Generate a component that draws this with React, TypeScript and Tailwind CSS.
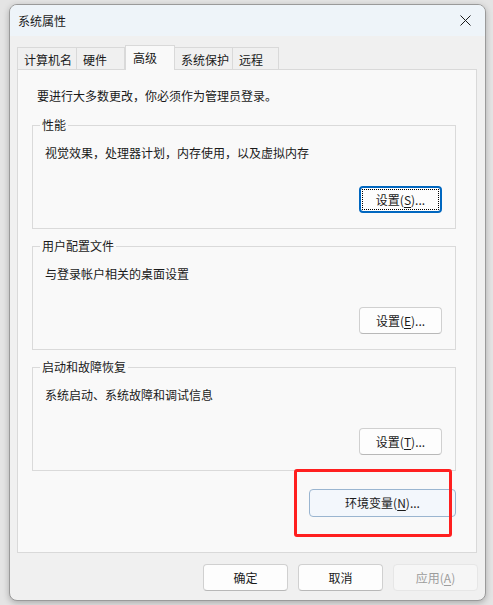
import React from 'react';

const font = { fontFamily: '"Noto Sans CJK SC", "Microsoft YaHei", sans-serif' };

const Mn: React.FC<{ k: string }> = ({ k }) => <span className="underline underline-offset-2">{k}</span>;

interface BtnProps {
  children: React.ReactNode;
  variant?: 'normal' | 'focus' | 'hover' | 'disabled';
  className?: string;
}

const Btn: React.FC<BtnProps> = ({ children, variant = 'normal', className = '' }) => {
  if (variant === 'focus') {
    return (
      <div className={`h-[27px] rounded-[4px] border-2 border-[#0067c0] bg-[#fdfdfd] p-[1px] ${className}`}>
        <div className="h-full w-full border border-dotted border-black flex items-center justify-center text-[12px] text-[#1a1a1a]">
          {children}
        </div>
      </div>
    );
  }
  const styles = {
    normal: 'border-[#d0d0d0] border-b-[#b8b8b8] bg-[#fdfdfd] text-[#1a1a1a]',
    hover: 'border-[#9ab5d0] bg-[#f3f7fc] text-[#1a1a1a]',
    disabled: 'border-[#e6e6e6] bg-[#f6f6f6] text-[#9d9d9d]',
  }[variant];
  return (
    <div className={`h-[27px] rounded-[4px] border flex items-center justify-center text-[12px] ${styles} ${className}`}>
      {children}
    </div>
  );
};

const Group: React.FC<{ title: string; text: string; btn: React.ReactNode }> = ({ title, text, btn }) => (
  <fieldset className="border border-[#dadada] w-[424px] h-[112px] -mt-[8px] flex flex-col">
    <legend className="ml-[7px] px-[2px] text-[12px] leading-[16px] text-[#1a1a1a]">{title}</legend>
    <div className="pl-[12px] mt-[12px] text-[12px] leading-[16px] text-[#1a1a1a]">{text}</div>
    <div className="flex justify-end pr-[13px] mt-[25px]">{btn}</div>
  </fieldset>
);

const tabs = ['计算机名', '硬件', '高级', '系统保护', '远程'];
const tabW = ['w-[60px]', 'w-[48px]', 'w-[50px]', 'w-[58px]', 'w-[46px]'];

export default function App() {
  return (
    <div className="w-[493px] h-[605px] bg-[#e4e4e4] pt-[4px] pl-[9px] overflow-hidden" style={font}>
      <div className="w-[477px] h-[597px] rounded-[8px] border border-[#9a9a9a] bg-[#f0f0f0] overflow-hidden flex flex-col shadow-[0_2px_6px_rgba(0,0,0,0.25)]">
        {/* Title bar */}
        <div className="h-[31px] bg-[#eef4f9] flex items-center justify-between pl-[8px] pr-[14px] shrink-0">
          <span className="text-[12px] text-[#1a1a1a]">系统属性</span>
          <svg width="11" height="11" viewBox="0 0 11 11">
            <path d="M0.5 0.5 L10.5 10.5 M10.5 0.5 L0.5 10.5" stroke="#1a1a1a" strokeWidth="1" />
          </svg>
        </div>

        <div className="flex flex-col pl-[7px] pr-[8px] pt-[9px]">
          {/* Tabs */}
          <div className="flex items-end h-[24px] relative z-10">
            {tabs.map((t, i) =>
              i === 2 ? (
                <div
                  key={t}
                  className={`${tabW[i]} h-[25px] -mb-px bg-[#f9f9f9] border border-b-0 border-[#d9d9d9] text-[12px] text-[#1a1a1a] pl-[7px] pt-[3px]`}
                >
                  {t}
                </div>
              ) : (
                <div
                  key={t}
                  className={`${tabW[i]} h-[22px] bg-[#f0f0f0] border border-b-0 border-[#d9d9d9] ${i > 0 ? 'border-l-0' : ''} ${i === 3 ? 'border-l' : ''} text-[12px] text-[#1a1a1a] pl-[6px] pt-[3px]`}
                >
                  {t}
                </div>
              )
            )}
          </div>

          {/* Panel */}
          <div className="w-[460px] h-[484px] bg-[#f9f9f9] border border-[#d9d9d9] flex flex-col pl-[14px] relative">
            <div className="mt-[18px] pl-[5px] text-[12px] leading-[16px] text-[#1a1a1a]">
              要进行大多数更改，你必须作为管理员登录。
            </div>
            <div className="mt-[21px] flex flex-col gap-[17px]">
              <Group
                title="性能"
                text="视觉效果，处理器计划，内存使用，以及虚拟内存"
                btn={
                  <Btn variant="focus" className="w-[83px]">
                    设置(<Mn k="S" />)...
                  </Btn>
                }
              />
              <Group
                title="用户配置文件"
                text="与登录帐户相关的桌面设置"
                btn={
                  <Btn className="w-[83px]">
                    设置(<Mn k="E" />)...
                  </Btn>
                }
              />
              <Group
                title="启动和故障恢复"
                text="系统启动、系统故障和调试信息"
                btn={
                  <Btn className="w-[83px]">
                    设置(<Mn k="T" />)...
                  </Btn>
                }
              />
            </div>
            <div className="flex justify-end w-[424px] mt-[18px]">
              <Btn variant="hover" className="w-[147px] h-[28px]">
                环境变量(<Mn k="N" />)...
              </Btn>
            </div>
            {/* annotation */}
            <div className="absolute left-[276px] top-[399px] w-[158px] h-[68px] border-[3px] border-[#ff1f1f] rounded-[3px]" />
          </div>

          {/* Bottom buttons */}
          <div className="flex justify-end gap-[10px] mt-[11px] -mr-[1px]">
            <Btn className="w-[85px]">确定</Btn>
            <Btn className="w-[85px]">取消</Btn>
            <Btn variant="disabled" className="w-[85px]">
              应用(<Mn k="A" />)
            </Btn>
          </div>
        </div>
      </div>
    </div>
  );
}
